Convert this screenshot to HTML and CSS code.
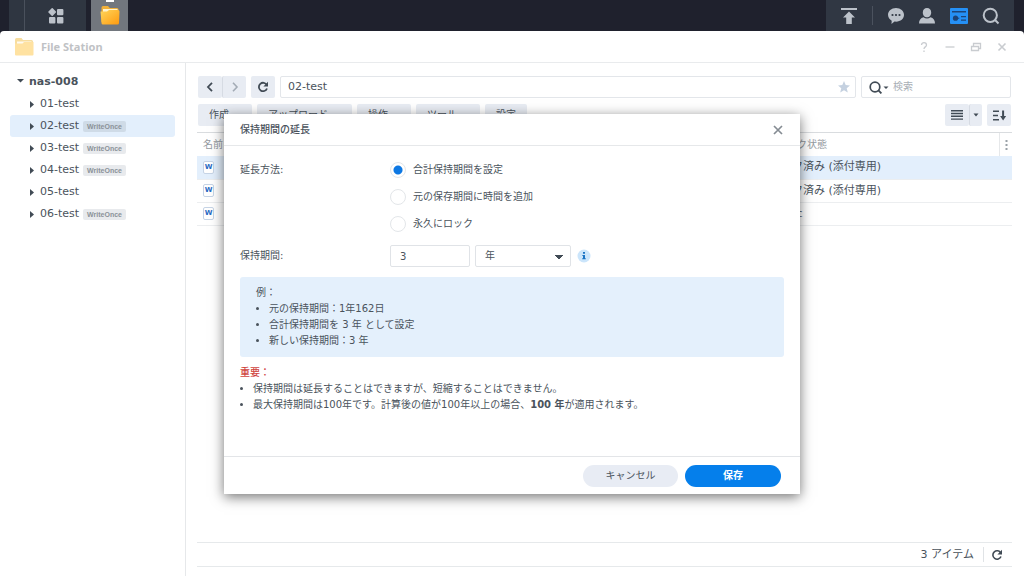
FILE: index.html
```html
<!DOCTYPE html>
<html lang="ja">
<head>
<meta charset="utf-8">
<title>File Station</title>
<link rel="stylesheet" href="styles.css">
</head>
<body>
<div class="desktop">
  <header class="taskbar">
    <div class="task-main">
      <button class="task-btn task-menu" type="button" aria-label="メインメニュー">
        <svg width="16" height="16" viewBox="0 0 16 16" fill="#bcc2ca"><path d="M4.200.8 7.300 4 4.200 7.200 1 4z" stroke="#bcc2ca" stroke-width="1.500" stroke-linejoin="round"/><rect x="9" y="1" width="6.400" height="6.200" rx="1"/><rect x="1" y="9" width="6.400" height="6.400" rx="1"/><rect x="9" y="9" width="6.400" height="6.400" rx="1"/></svg>
      </button>
    </div>
    <button class="task-btn task-app" type="button" aria-label="File Station">
      <svg width="22" height="29" viewBox="0 0 22 29"><defs><linearGradient id="fold" x1="0" y1="0" x2="1" y2="1"><stop offset="0" stop-color="#ffd65c"/><stop offset="1" stop-color="#ff9a0e"/></linearGradient></defs><rect x="7" y="0" width="8" height="2" fill="#fff"/><path d="M2.500 7.500a1.500 1.500 0 0 1 1.500-1.500h5l1.800 2H18a1.500 1.500 0 0 1 1.500 1.500V22h-17z" fill="#f0b03a"/><path d="M4 9h14.500v10H4z" fill="#fff3cf"/><path d="M1.500 11.500 8 11.500l2-1.500h9a1.500 1.500 0 0 1 1.500 1.500l-.5 11.500a1.500 1.500 0 0 1-1.500 1.500H4A1.500 1.500 0 0 1 2.500 23z" fill="url(#fold)"/></svg>
    </button>
    <div class="task-tray">
      <button class="task-btn" type="button"><svg width="18" height="18" viewBox="0 0 18 18" fill="#bcc2ca"><path d="M1 1h16v2H1zM9 4.500l6 6h-3.200V17H6.200v-6.500H3z"/></svg></button>
      <span class="tray-line"></span>
      <button class="task-btn" type="button"><svg width="18" height="18" viewBox="0 0 18 18"><path d="M9 1c4.600 0 8 3 8 6.800 0 3.900-3.400 6.900-8 6.900-.5 0-1-.1-1.500-.1L4.500 17l.2-3.300C2.500 12.500 1 10.300 1 7.800 1 4 4.400 1 9 1z" fill="#bcc2ca"/><g fill="#313844"><circle cx="5.500" cy="8" r="1.100"/><circle cx="9" cy="8" r="1.100"/><circle cx="12.500" cy="8" r="1.100"/></g></svg></button>
      <button class="task-btn" type="button"><svg width="18" height="18" viewBox="0 0 18 18" fill="#bcc2ca"><path d="M9 1c2.500 0 4.200 1.800 4.200 4.400S11.500 10.300 9 10.300 4.800 8 4.800 5.400 6.500 1 9 1zM1 16.500c0-3.200 1.600-5.600 4.500-6.300 2.200 1.600 4.800 1.600 7 0 2.900.7 4.500 3.100 4.500 6.300z"/></svg></button>
      <button class="task-btn" type="button"><svg width="18" height="18" viewBox="0 0 18 18"><rect x="0" y="1" width="18" height="16" rx="1" fill="#2590f5"/><g fill="#1d4478"><path d="M2 4h14v1.500H2zM11 9h5v1.200h-5zM11 12.500h5v1.200h-5z"/><circle cx="5.500" cy="11.200" r="2.600"/><path d="M5.500 10.700h3.800v1H5.500z"/></g></svg></button>
      <button class="task-btn" type="button"><svg width="18" height="18" viewBox="0 0 18 18" fill="none" stroke="#bcc2ca" stroke-width="2"><circle cx="8.300" cy="8.300" r="6.600"/><path d="m12.800 12.800 3.700 3.700"/></svg></button>
    </div>
  </header>

  <div class="window">
    <div class="titlebar">
      <svg class="title-icon" width="20" height="20" viewBox="0 0 20 20"><path d="M1 2.500A1.500 1.500 0 0 1 2.500 1h5l1.500 2h8.500A1.500 1.500 0 0 1 19 4.500V17H1z" fill="#f7dd9f"/><path d="M3 4.500h14.500V9H3z" fill="#fffaf0"/><path d="M1 6.500h7.500l1.500-1.500h9.500V17.500a1 1 0 0 1-1 1H2a1 1 0 0 1-1-1z" fill="#ffe2a1"/></svg>
      <span class="title-text">File Station</span>
      <div class="win-controls">
        <button type="button"><svg width="12" height="12" viewBox="0 0 12 12" fill="none" stroke="#c9ccd0" stroke-width="1.300"><path d="M3.500 4c0-3.200 5-3.200 5 0C8.500 6 6 5.800 6 8"/><path d="M6 9.600v1.500"/></svg></button>
        <button type="button"><svg width="12" height="12" viewBox="0 0 12 12" stroke="#c9ccd0" stroke-width="1.300"><path d="M1.500 6h9"/></svg></button>
        <button type="button"><svg width="12" height="12" viewBox="0 0 12 12" fill="none" stroke="#c9ccd0" stroke-width="1.300"><path d="M1.500 5.500h7v4h-7zM3.500 5V2.500h7v5H9"/></svg></button>
        <button type="button"><svg width="12" height="12" viewBox="0 0 12 12" stroke="#c9ccd0" stroke-width="1.600"><path d="m2.500 2.500 7 7m0-7-7 7"/></svg></button>
      </div>
    </div>

    <div class="content">
      <nav class="sidebar">
        <button class="node root" type="button"><svg width="7" height="7" viewBox="0 0 7 7" fill="#414b55"><path d="M0 1h7L3.500 4.500z"/></svg>nas-008</button>
        <button class="node" type="button"><svg width="6" height="7" viewBox="0 0 6 7" fill="#414b55"><path d="M0 0v7l4-3.500z"/></svg>01-test</button>
        <button class="node selected" type="button"><svg width="6" height="7" viewBox="0 0 6 7" fill="#414b55"><path d="M0 0v7l4-3.500z"/></svg>02-test<span class="tag">WriteOnce</span></button>
        <button class="node" type="button"><svg width="6" height="7" viewBox="0 0 6 7" fill="#414b55"><path d="M0 0v7l4-3.500z"/></svg>03-test<span class="tag">WriteOnce</span></button>
        <button class="node" type="button"><svg width="6" height="7" viewBox="0 0 6 7" fill="#414b55"><path d="M0 0v7l4-3.500z"/></svg>04-test<span class="tag">WriteOnce</span></button>
        <button class="node" type="button"><svg width="6" height="7" viewBox="0 0 6 7" fill="#414b55"><path d="M0 0v7l4-3.500z"/></svg>05-test</button>
        <button class="node" type="button"><svg width="6" height="7" viewBox="0 0 6 7" fill="#414b55"><path d="M0 0v7l4-3.500z"/></svg>06-test<span class="tag">WriteOnce</span></button>
      </nav>

      <main class="main">
        <div class="bar">
          <div class="split">
            <button class="tool icon" type="button"><svg width="10" height="10" viewBox="0 0 10 10" fill="none" stroke="#414b55" stroke-width="1.800"><path d="M7 .8 3 5l4 4.200"/></svg></button>
            <button class="tool icon" type="button"><svg width="10" height="10" viewBox="0 0 10 10" fill="none" stroke="#a3abb5" stroke-width="1.600"><path d="m3 .8 4 4.200-4 4.200"/></svg></button>
          </div>
          <button class="tool icon" type="button"><svg width="12" height="12" viewBox="0 0 12 12"><path d="M9.800 4A4.200 4.200 0 1 0 10 7.500" fill="none" stroke="#414b55" stroke-width="1.800"/><path d="M11 .8V5.400H6.400z" fill="#414b55"/></svg></button>
          <div class="field path">
            <input type="text" value="02-test" aria-label="パス">
            <svg width="12" height="12" viewBox="0 0 12 12" fill="#c5d1e0"><path d="m6 0 1.700 4.100 4.300.3-3.300 2.800 1.100 4.300L6 9.200l-3.800 2.300 1.100-4.300L0 4.400l4.300-.3z"/></svg>
          </div>
          <div class="field search">
            <svg width="20" height="13" viewBox="0 0 20 13"><circle cx="6" cy="6" r="4.800" fill="none" stroke="#414b55" stroke-width="1.700"/><path d="m9.200 9.200 3.200 3.200" stroke="#414b55" stroke-width="1.800"/><path d="M14.500 5.500h5L17 8z" fill="#414b55"/></svg>
            <input type="search" placeholder="検索" aria-label="検索">
          </div>
        </div>
        <div class="bar actions">
          <button class="tool caret" type="button">作成</button>
          <button class="tool caret upload" type="button">アップロード</button>
          <button class="tool caret" type="button">操作</button>
          <button class="tool caret" type="button">ツール</button>
          <button class="tool" type="button">設定</button>
          <div class="split view">
            <button class="tool icon" type="button"><svg width="12" height="10" viewBox="0 0 12 10" fill="#414b55"><path d="M0 0h12v1.400H0zM0 2.800h12v1.400H0zM0 5.600h12V7H0zM0 8.400h12v1.400H0z"/></svg></button>
            <button class="tool icon thin" type="button"><svg width="6" height="4" viewBox="0 0 6 4" fill="#414b55"><path d="M.5.5h5L3 3.500z"/></svg></button>
          </div>
          <button class="tool icon" type="button"><svg width="13" height="11" viewBox="0 0 13 11" fill="#414b55"><path d="M0 .5h6V2H0zM0 4.700h5v1.500H0zM0 9h6v1.500H0zM9.100.5H11.100V6h2l-3 4.500L7.100 6h2z"/></svg></button>
        </div>

        <div class="listing">
          <table>
            <thead><tr><th>名前</th><th class="status">ロック状態</th><th class="more"><svg width="3" height="10" viewBox="0 0 3 10" fill="#9aa1a8"><path d="M.5 0h2v2h-2zM.5 4h2v2h-2zM.5 8h2v2h-2z"/></svg></th></tr></thead>
            <tbody>
              <tr class="picked"><td><span class="doc">W</span></td><td colspan="2" class="state">ロック済み (添付専用)</td></tr>
              <tr><td><span class="doc">W</span></td><td colspan="2" class="state">ロック済み (添付専用)</td></tr>
              <tr><td><span class="doc">W</span></td><td colspan="2" class="state">開いた</td></tr>
            </tbody>
          </table>
        </div>

        <footer class="statusbar">
          <span>3 アイテム</span>
          <button type="button"><svg width="12" height="12" viewBox="0 0 12 12"><path d="M9.800 4A4.200 4.200 0 1 0 10 7.500" fill="none" stroke="#414b55" stroke-width="1.600"/><path d="M11 .8V5.400H6.400z" fill="#414b55"/></svg></button>
        </footer>
      </main>
    </div>
  </div>

  <div class="overlay">
    <form class="dialog" role="dialog" aria-labelledby="dlg-title">
      <div class="dlg-head">
        <h2 id="dlg-title">保持期間の延長</h2>
        <button class="dlg-close" type="button" aria-label="閉じる"><svg width="10" height="10" viewBox="0 0 10 10" stroke="#858c93" stroke-width="1.700"><path d="m1 1 8 8m0-8-8 8"/></svg></button>
      </div>
      <div class="dlg-body">
        <div class="row">
          <span class="label">延長方法:</span>
          <div class="radios">
            <label><input type="radio" name="mode" checked>合計保持期間を設定</label>
            <label><input type="radio" name="mode">元の保存期間に時間を追加</label>
            <label><input type="radio" name="mode">永久にロック</label>
          </div>
        </div>
        <div class="row period">
          <label class="label" for="period">保持期間:</label>
          <div class="controls">
            <input id="period" class="box num" type="text" value="3">
            <select class="box unit" aria-label="単位"><option>年</option></select>
            <svg width="14" height="14" viewBox="0 0 14 14"><circle cx="7" cy="7" r="6.500" fill="#cbe5fb"/><path d="M6 3h2v1.700H6zM5.400 5.900H8v3.300h.8v1H5.200v-1H6V6.900h-.6z" fill="#1a73c4"/></svg>
          </div>
        </div>
        <div class="example">
          <p>例：</p>
          <ul>
            <li>元の保持期間：1年162日</li>
            <li>合計保持期間を 3 年 として設定</li>
            <li>新しい保持期間：3 年</li>
          </ul>
        </div>
        <div class="notice">
          <p class="warn">重要：</p>
          <ul>
            <li>保持期間は延長することはできますが、短縮することはできません。</li>
            <li>最大保持期間は100年です。計算後の値が100年以上の場合、<b>100 年</b>が適用されます。</li>
          </ul>
        </div>
      </div>
      <div class="dlg-foot">
        <button class="pill" type="button">キャンセル</button>
        <button class="pill primary" type="button">保存</button>
      </div>
    </form>
  </div>
</div>
</body>
</html>
```
FILE: styles.css
```css
* { box-sizing: border-box; }
body, h2, p, ul { margin: 0; padding: 0; }
body {
  font-family: "DejaVu Sans", "Noto Sans CJK JP", sans-serif;
  font-size: 10px;
  line-height: 16px;
  color: #4a535c;
  background: #1f212d;
}
button, input, select { font: inherit; color: inherit; }
button { border: 0; padding: 0; background: none; display: flex; align-items: center; justify-content: center; }
svg { flex: none; display: block; }

.desktop { display: flex; flex-direction: column; height: 100vh; position: relative; }

.taskbar { height: 31px; flex: none; display: flex; padding: 0 10px 0 9px; background: #1f212d; }
.task-main { width: 77px; padding-left: 15px; margin-right: 5px; background: #2f3641; display: flex; }
.task-menu { flex: 1; border-left: 1px solid #4a515c; }
.task-app { width: 37px; background: #72777e; align-items: flex-start; }
.task-tray { margin-left: auto; width: 188px; padding: 0 7px; background: #303743; display: flex; align-items: center; }
.task-tray .task-btn { width: 32px; height: 31px; }
.tray-line { width: 1px; height: 19px; background: #4b525e; margin: 0 7px; }

.window { flex: 1; min-height: 0; display: flex; flex-direction: column; background: #fff; border-radius: 4px 4px 0 0; }
.titlebar { height: 32px; flex: none; display: flex; align-items: center; padding: 0 16px 0 14px; border-bottom: 1px solid #e9ebed; }
.title-text { font-family: "Noto Sans", sans-serif; font-weight: bold; font-size: 11px; color: #bfc2c5; margin-left: 7px; }
.win-controls { margin-left: auto; display: flex; gap: 14px; }

.content { flex: 1; min-height: 0; display: flex; }
.sidebar { width: 186px; flex: none; border-right: 1px solid #e6e8ea; padding: 7px 10px; }
.node { width: 100%; height: 22px; justify-content: flex-start; padding-left: 20px; gap: 4px; font-size: 11px; border-radius: 3px; }
.node.root { padding-left: 7px; gap: 5px; font-weight: bold; height: 23px; }
.node.selected { background: #e3effc; }
.tag { font: bold 7px/11px "Liberation Sans", sans-serif; color: #8b9299; background: #e8eaed; padding: 0 4px; border-radius: 2px; }
.selected .tag { background: #cfdbe7; }

.main { flex: 1; min-width: 0; display: flex; flex-direction: column; padding: 13px 12px 9px 11px; }
.bar { display: flex; gap: 5px; padding: 0 1px; }
.actions { margin: 6px 0; }
.tool { height: 22px; background: #e8ecf3; border-radius: 2px; padding: 0 11px; }
.tool.caret { padding-right: 23px; }
.tool.upload { padding-right: 24px; }
.tool.icon { width: 24px; padding: 0; }
.tool.thin { width: 13px; }
.split { display: flex; }
.split .tool + .tool { border-left: 1px solid #d6dbe3; }
.view { margin-left: auto; }
.field { height: 22px; border: 1px solid #e3e6ea; border-radius: 2px; display: flex; align-items: center; padding: 0 5px 0 7px; }
.field input { flex: 1; min-width: 0; border: 0; padding: 0; background: none; outline: 0; appearance: none; }
.field input::placeholder { color: #a9afb6; }
.path { flex: 1; font-size: 11px; }
.search { width: 150px; gap: 4px; }

.listing { flex: 1; border-top: 1px solid #d9dcdf; }
table { width: 100%; border-collapse: collapse; table-layout: fixed; }
th, td { height: 23px; padding: 0 6px; text-align: left; }
th { font-weight: normal; color: #949a9f; }
td { font-size: 11px; border-bottom: 1px solid #eceef0; }
th.status { width: 229px; padding-left: 7px; }
th.more { width: 13px; padding: 0 5px; border-left: 1px solid #e6e8ea; }
td.state { padding: 0; white-space: nowrap; }
.picked { background: #e3effc; }
.doc { display: block; width: 11px; height: 13px; border: 1px solid #c6d4e6; border-radius: 2px; background: #fff; color: #2a6bc4; font: bold 7px/11px "DejaVu Sans", sans-serif; text-align: center; }

.statusbar { height: 25px; border: solid #e6e9eb; border-width: 1px 0; display: flex; align-items: center; justify-content: flex-end; font-size: 11px; }
.statusbar button { border-left: 1px solid #e0e3e6; height: 15px; margin-left: 9px; padding: 0 9px 0 7px; }

.overlay { position: absolute; inset: 32px 0 0; display: flex; align-items: center; justify-content: center; }
.dialog { width: 576px; max-width: 100%; background: #fff; box-shadow: 0 3px 12px rgba(0, 0, 0, 0.55); }
.dlg-head { height: 32px; padding: 0 17px 0 16px; display: flex; align-items: center; justify-content: space-between; border-bottom: 1px solid #e6e8ea; }
.dlg-head h2 { font-size: 10px; font-weight: 500; }
.dlg-body { min-height: 310px; padding: 14px 16px; }
.row { display: flex; }
.label { width: 150px; line-height: 20px; }
.radios { display: flex; flex-direction: column; gap: 7px; }
.radios label { display: flex; align-items: center; height: 20px; gap: 7px; }
.radios input { appearance: none; width: 16px; height: 16px; margin: 0; border: 1px solid #e3e6e9; border-radius: 50%; background: #fff; }
.radios input:checked { background: radial-gradient(circle, #0d78e3 4px, #fff 5px); }
.period { margin-top: 11px; align-items: center; }
.controls { display: flex; align-items: center; gap: 5px; }
.controls svg { margin-left: 1px; }
.box { height: 22px; border: 1px solid #e0e3e7; border-radius: 2px; background: #fff; padding: 0 9px; }
.num { width: 80px; }
.unit { width: 96px; appearance: none; background: conic-gradient(from -45deg at 50% 100%, #414b55 90deg, transparent 0) 79px 9px / 8px 4px no-repeat, #fff; }
.example { margin-top: 10px; padding: 8px 16px; background: #e4f0fc; border-radius: 3px; }
.notice { margin-top: 8px; }
.warn { color: #d0453f; font-weight: 500; }
li { list-style: disc; margin-left: 13px; }
.dlg-foot { height: 38px; border-top: 1px solid #e3e5e8; padding-right: 19px; display: flex; align-items: center; justify-content: flex-end; gap: 7px; }
.pill { width: 95px; height: 22px; border-radius: 11px; background: #e8ecf4; }
.primary { width: 96px; background: #057feb; color: #fff; font-weight: bold; }
```
